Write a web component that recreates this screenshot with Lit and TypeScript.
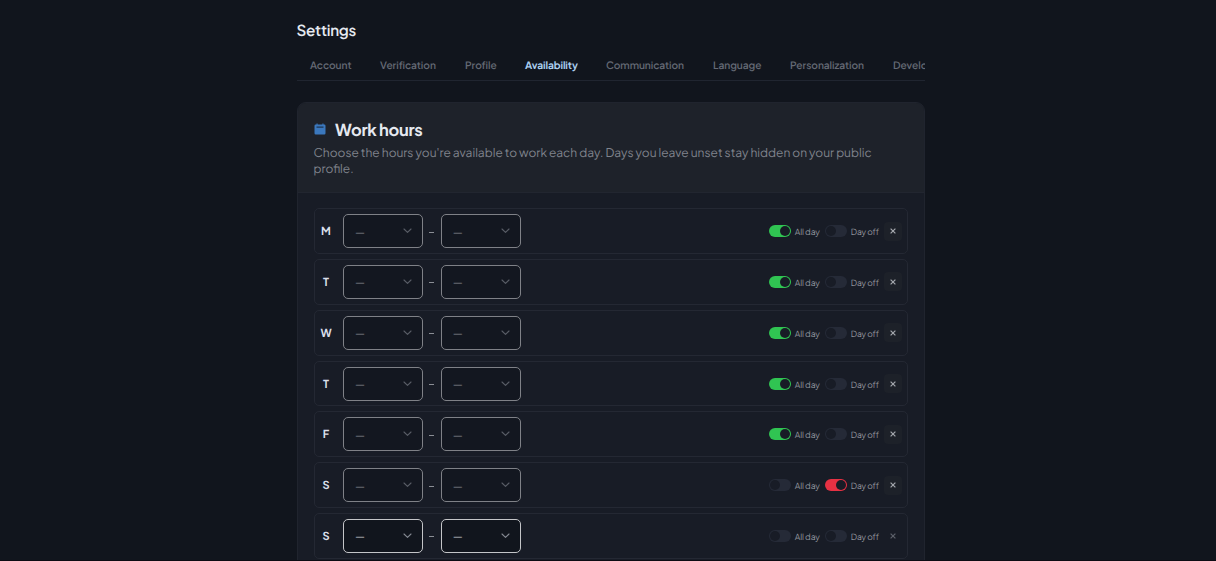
import { LitElement, html, css, svg } from "lit";
import { customElement, property } from "lit/decorators.js";

const chevron = svg`<path d="M1 1 L4.5 4.4 L8 1" fill="none" stroke="currentColor" stroke-width="1.1" stroke-linecap="round" stroke-linejoin="round"/>`;

@customElement("time-select")
class TimeSelect extends LitElement {
  static styles = css`
    :host { display: block; box-sizing: border-box; width: 80px; height: 34px; }
    .box { box-sizing: border-box; width: 100%; height: 100%; display: flex; align-items: center; justify-content: space-between; padding: 0 10px 0 11px; border: 1px solid #c4c5c8; border-radius: 5px; background: #11151d; color: #9a9da3; }
    .value { width: 9px; height: 17px; font-size: 10.2px; line-height: 19px; font-weight: 700; }
    svg { width: 9px; height: 6px; color: #858992; }
  `;
  render() {
    return html`<div class="box"><span class="value">—</span><svg viewBox="0 0 9 6">${chevron}</svg></div>`;
  }
}

@customElement("toggle-switch")
class ToggleSwitch extends LitElement {
  @property() tone = "";
  static styles = css`
    :host { display: block; }
    .track { box-sizing: border-box; width: 22px; height: 12px; border-radius: 6px; background: #252a37; padding: 1px; display: flex; }
    .knob { width: 10px; height: 10px; border-radius: 50%; background: #181c26; }
    .green { background: #30c452; justify-content: flex-end; }
    .red { background: #e63143; justify-content: flex-end; }
  `;
  render() {
    return html`<div class="track ${this.tone}"><div class="knob"></div></div>`;
  }
}

@customElement("day-row")
class DayRow extends LitElement {
  @property() day = "";
  @property() mode = "";
  static styles = css`
    :host { display: block; }
    .row { box-sizing: border-box; height: 45.8px; border: 1px solid #242833; border-radius: 5px; display: flex; align-items: center; padding: 0 5.5px 0 6px; }
    .day { width: 11px; display: flex; justify-content: center; font-size: 11px; font-weight: 700; color: #d9dfe9; margin-right: 11.5px; line-height: 16px; padding-top: 2px; }
    .dash { width: 5.2px; height: 1px; margin: 2px 6.3px 0; background: #8b8e95; }
    .dim { opacity: .6; }
    .controls { margin-left: auto; display: flex; align-items: center; }
    .label { font-size: 8.5px; letter-spacing: -.15px; line-height: 12px; color: #92959d; white-space: nowrap; margin-left: 4.3px; padding-top: 2px; }
    .all { width: 24px; margin-right: 5.7px; }
    .off { width: 27px; margin-right: 5.7px; }
    .clear { width: 18px; height: 19px; border-radius: 4px; background: #1d2129; color: #a3a6ac; display: flex; align-items: center; justify-content: center; }
    .clear svg { width: 6px; height: 6px; }
    .idle { background: none; color: #5d616a; }
  `;
  render() {
    const dim = this.mode ? "dim" : "";
    return html`<div class="row">
      <span class="day">${this.day}</span>
      <time-select class=${dim}></time-select>
      <span class="dash"></span>
      <time-select class=${dim}></time-select>
      <div class="controls">
        <toggle-switch tone=${this.mode === "all" ? "green" : ""}></toggle-switch><span class="label all">All day</span>
        <toggle-switch tone=${this.mode === "off" ? "red" : ""}></toggle-switch><span class="label off">Day off</span>
        <div class="clear ${this.mode ? "" : "idle"}"><svg viewBox="0 0 6 6"><path d="M.6 .6 5.4 5.4M5.4 .6 .6 5.4" stroke="currentColor" stroke-width="1.2"/></svg></div>
      </div>
    </div>`;
  }
}

@customElement("app-root")
class AppRoot extends LitElement {
  static styles = css`
    :host { display: block; box-sizing: border-box; height: 561px; overflow: hidden; background: #11151d; border-bottom: 1px solid #0c0b13; font-family: "Plus Jakarta Sans", Figtree, Inter, sans-serif; text-rendering: geometricPrecision; color: #e5e9f0; }
    .page { width: 628.5px; margin-left: 296.5px; padding-top: 20px; }
    h1 { margin: 0; font-size: 15.2px; line-height: 22px; font-weight: 600; letter-spacing: -.3px; }
    .tabs { height: 39px; box-sizing: border-box; border-bottom: 1px solid #202530; display: flex; gap: 29px; padding-left: 13.5px; overflow: hidden; white-space: nowrap; font-size: 10.2px; font-weight: 600; letter-spacing: -.06px; line-height: 47px; color: #646974; }
    .tab { flex: none; }
    .t0 { width: 41px; } .t1 { width: 56px; } .t2 { width: 31px; } .t3 { width: 52px; } .t4 { width: 78px; } .t5 { width: 48px; } .t6 { width: 74px; }
    .active { color: #a9cdee; font-weight: 700; letter-spacing: -.12px; }
    .card { margin-top: 21px; height: 480px; box-sizing: border-box; border: 1px solid #20242e; border-radius: 9px 9px 0 0; background: #181c26; overflow: hidden; }
    .head { height: 90px; box-sizing: border-box; border-bottom: 1px solid #222630; background: #1e222a; padding: 15px 16px 0; }
    .title { display: flex; align-items: center; height: 23px; }
    .title svg { width: 12px; height: 12px; margin: 0 9.5px 1px 0; }
    h2 { margin: 0; font-size: 16.5px; line-height: 23px; font-weight: 700; letter-spacing: -.32px; }
    p { margin: 4px 0 0; font-size: 11.98px; line-height: 15.5px; color: #80848d; font-weight: 400; white-space: nowrap; }
    .rows { padding: 15.3px 16px 0 16px; display: flex; flex-direction: column; gap: 5px; }
  `;
  render() {
    const tabs = ["Account", "Verification", "Profile", "Availability", "Communication", "Language", "Personalization", "Developer"];
    const days = [["M", "all"], ["T", "all"], ["W", "all"], ["T", "all"], ["F", "all"], ["S", "off"], ["S", ""]];
    return html`<main class="page">
      <h1>Settings</h1>
      <nav class="tabs">${tabs.map((t, i) => html`<span class="tab t${i} ${i === 3 ? "active" : ""}">${t}</span>`)}</nav>
      <section class="card">
        <header class="head">
          <div class="title">
            <svg viewBox="0 0 12 12"><path d="M2.5 0.5h1.1v1h4.8v-1h1.1v1h.8q1.2 0 1.2 1.2v7.6q0 1.2-1.2 1.2h-8.6q-1.2 0-1.2-1.2v-7.6q0-1.2 1.2-1.2h.8z" fill="#3b78bd"/><path d="M2.5 4.1h7" stroke="#1f3552" stroke-width="1.2"/></svg>
            <h2>Work hours</h2>
          </div>
          <p>Choose the hours you're available to work each day. Days you leave unset stay hidden on your public<br>profile.</p>
        </header>
        <div class="rows">${days.map(([d, m]) => html`<day-row day=${d} mode=${m}></day-row>`)}</div>
      </section>
    </main>`;
  }
}
